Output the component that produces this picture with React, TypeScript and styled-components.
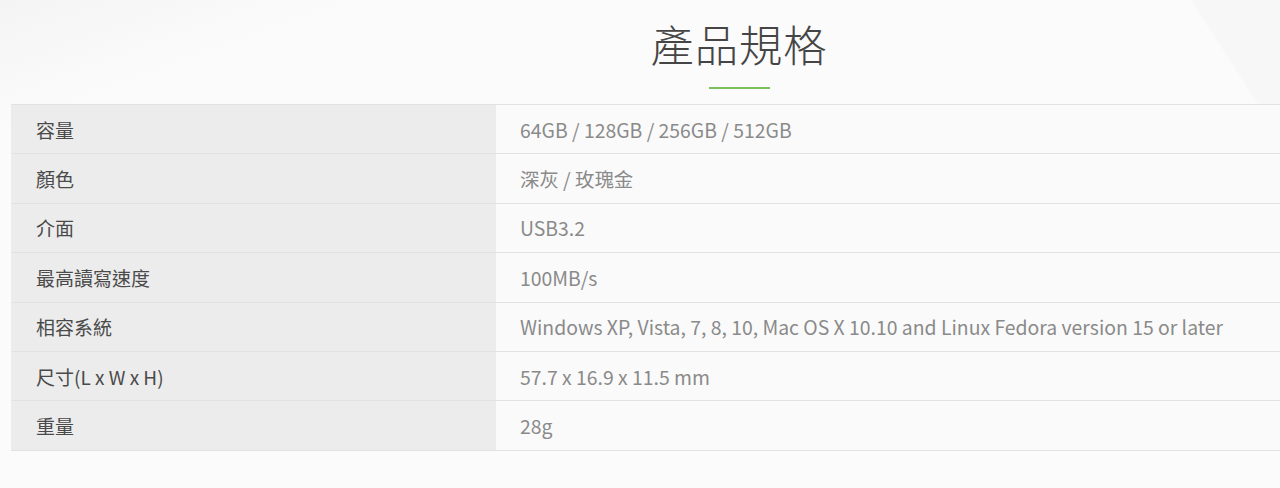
import React from 'react';
import styled, { createGlobalStyle } from 'styled-components';

const GlobalStyle = createGlobalStyle`
  html, body {
    margin: 0;
    padding: 0;
    background: #fbfbfb;
  }
  body {
    font-family: "Noto Sans CJK TC", "Noto Sans", sans-serif;
  }
`;

const Page = styled.section`
  width: 1280px;
  height: 488px;
  overflow: hidden;
  background:
    linear-gradient(57deg, transparent 94.3%, #f7f7f7 94.5%),
    linear-gradient(160deg, #f4f4f4 0%, #f9f9f9 10%, transparent 14%),
    #fbfbfb;
`;

const Header = styled.header`
  display: flex;
  flex-direction: column;
  align-items: center;
  padding-top: 13px;
  padding-left: 198px;
`;

const Title = styled.h2`
  margin: 0;
  font-size: 43.3px;
  line-height: 61px;
  font-weight: 300;
  color: #454545;
  letter-spacing: 1px;
`;

const Underline = styled.span`
  display: block;
  width: 61px;
  height: 2px;
  margin-top: 13px;
  background: #7cbf5c;
`;

const Table = styled.div`
  margin: 15px 0 0 11px;
  border-bottom: 1px solid #e2e2e2;
`;

const Row = styled.div`
  display: grid;
  grid-template-columns: 485px 1fr;
  height: 49.4px;
  box-sizing: border-box;
  border-top: 1px solid #e2e2e2;
`;

const Cell = styled.div<{ $label?: boolean }>`
  display: flex;
  align-items: center;
  padding-left: ${(p) => (p.$label ? '25px' : '24px')};
  background: ${(p) => (p.$label ? '#ececec' : '#fafafa')};
  color: ${(p) => (p.$label ? '#4a4a4a' : '#8a8a8a')};
  font-size: ${(p) => (p.$label ? '19px' : '19.4px')};
  white-space: nowrap;
`;

const specs: [string, string][] = [
  ['容量', '64GB / 128GB / 256GB / 512GB'],
  ['顏色', '深灰 / 玫瑰金'],
  ['介面', 'USB3.2'],
  ['最高讀寫速度', '100MB/s'],
  ['相容系統', 'Windows XP, Vista, 7, 8, 10, Mac OS X 10.10 and Linux Fedora version 15 or later'],
  ['尺寸(L x W x H)', '57.7 x 16.9 x 11.5 mm'],
  ['重量', '28g'],
];

const App: React.FC = () => {
  return (
    <Page>
      <GlobalStyle />
      <Header>
        <Title>產品規格</Title>
        <Underline />
      </Header>
      <Table>
        {specs.map(([label, value]) => (
          <Row key={label}>
            <Cell $label>{label}</Cell>
            <Cell>{value}</Cell>
          </Row>
        ))}
      </Table>
    </Page>
  );
};

export default App;
